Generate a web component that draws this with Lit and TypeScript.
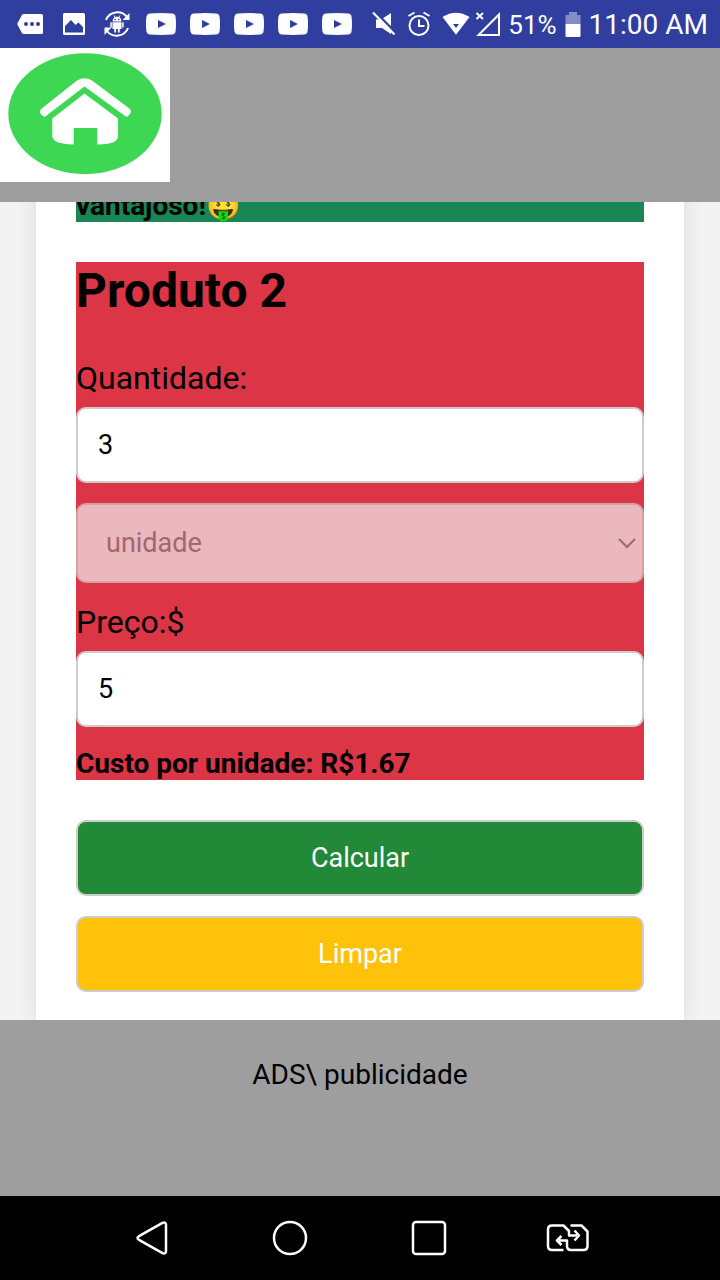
import { LitElement, html, css, svg } from "lit";
import { customElement } from "lit/decorators.js";

const video = html`<svg class="video" width="30" height="22" viewBox="0 0 30 22" aria-hidden="true">
  <path fill="#fff" fill-rule="evenodd" d="M4 .5Q15-.3 26 .5Q29.300.9 29.600 4Q30.400 11 29.600 18Q29.300 21.100 26 21.500Q15 22.300 4 21.500Q.7 21.100.4 18Q-.4 11 .4 4Q.7.9 4 .5ZM12 7V15L20 11Z"/>
</svg>`;

@customElement("status-bar")
class StatusBar extends LitElement {
  static styles = css`
    :host {
      display: flex;
      align-items: center;
      justify-content: space-between;
      height: 48px;
      flex: none;
      padding: 0 12px 0 17px;
      background: #303e9f;
      color: #fff;
      font-family: Roboto, sans-serif;
    }
    svg { display: block; flex: none; }
    .group { display: flex; align-items: center; }
    .notes { gap: 14px; }
    .notes .wide { margin-right: 3px; }
    .image { margin: 0 4px 0 3px; }
    .sync { margin-right: 1px; }
    .system { gap: 8px; }
    .clock { font-size: 28px; line-height: 34px; padding-top: 2px; }
    .percent { font-size: 26px; line-height: 30px; padding-top: 2px; }
  `;
  render() {
    return html`
      <div class="group notes">
        <svg class="wide" width="26" height="22" viewBox="0 0 26 22" aria-hidden="true">
          <path fill="#fff" d="M6.500 1H24.500Q26 1 26 2.500V19.500Q26 21 24.500 21H6.500Q5.500 21 5 20L.6 12Q.2 11 .6 10L5 2Q5.500 1 6.500 1Z"/>
          <g fill="#303e9f"><circle cx="9" cy="11" r="2"/><circle cx="15" cy="11" r="2"/><circle cx="21" cy="11" r="2"/></g>
        </svg>
        <svg class="image" width="22" height="22" viewBox="0 0 22 22" aria-hidden="true">
          <path fill="#fff" fill-rule="evenodd" d="M1.500 0H20.500Q22 0 22 1.500V20.500Q22 22 20.500 22H1.500Q0 22 0 20.500V1.500Q0 0 1.500 0ZM2 19.500H20V14L15.500 9.500L12.500 12L8 7L2 13Z"/>
        </svg>
        <svg class="sync" width="28" height="28" viewBox="0 0 28 28" aria-hidden="true">
          <g fill="none" stroke="#fff" stroke-width="2">
            <path d="M3 10A12 11.500 0 0 1 24 7"/><path d="M25 18A12 11.500 0 0 1 4 21"/>
          </g>
          <path fill="#fff" d="M26.500 3V10H19.500ZM1.500 25V17.500H8.500Z"/>
          <path fill="#fff" d="M9.500 11.500Q9.500 8.500 11.500 7.300L10.500 5.500L11.200 5.200L12.300 6.900Q14 6.300 15.700 6.900L16.800 5.200L17.500 5.500L16.500 7.300Q18.500 8.500 18.500 11.500ZM9.500 12.300H18.500V19H16.700V22.500H14.900V19H13.100V22.500H11.300V19H9.500ZM7.300 12.300H8.800V17.500H7.300ZM19.200 12.300H20.700V17.500H19.200Z"/>
          <g fill="#303e9f"><circle cx="12.200" cy="9.500" r=".8"/><circle cx="15.800" cy="9.500" r=".8"/></g>
        </svg>
        ${[0, 1, 2, 3, 4].map(() => video)}
      </div>
      <div class="group system">
        <svg width="128" height="28" viewBox="373 10 128 28" aria-hidden="true">
          <path fill="#fff" d="M377 19.500H382L392 13V34L383 28H377Z"/>
          <path stroke="#303e9f" stroke-width="2.500" d="M376 11.500L397 33"/>
          <path stroke="#fff" stroke-width="2" d="M374 12.500L395.500 34.500"/>
          <g fill="none" stroke="#fff" stroke-width="2">
            <circle cx="420" cy="25.500" r="9.500"/><path d="M420 19.500V26H425.500M409.500 16L415.500 12.500M430.500 16L424.500 12.500"/>
          </g>
          <path fill="#fff" d="M443.500 17Q457 8.500 470.500 17L457 34.800Z"/>
          <path fill="#303e9f" d="M454 24H460L457 28Z"/>
          <path fill="none" stroke="#fff" stroke-width="2" d="M479.500 35H500V14.500ZM477.500 13L484 19M484 13L477.500 19"/>
        </svg>
        <span class="percent">51%</span>
        <svg width="16" height="25" viewBox="0 0 16 25" aria-hidden="true">
          <path fill="#858cc7" d="M4 0H12V3H15.500V12H.5V3H4Z"/><path fill="#fff" d="M.5 12H15.500V24Q15.500 25 14.500 25H1.500Q.5 25 .5 24Z"/>
        </svg>
        <span class="clock">11:00 AM</span>
      </div>
    `;
  }
}

@customElement("nav-bar")
class NavBar extends LitElement {
  static styles = css`
    :host {
      display: flex;
      align-items: center;
      justify-content: center;
      gap: 95px;
      height: 84px;
      flex: none;
      padding-right: 2px;
      background: #000;
      box-sizing: border-box;
    }
    button { padding: 0; border: 0; background: none; }
    svg { display: block; }
  `;
  icon(label: string, shape: unknown) {
    return html`<button type="button" aria-label=${label}>
      <svg width="44" height="44" viewBox="0 0 44 44" fill="none" stroke="#fff" stroke-width="2.500" stroke-linecap="butt" stroke-linejoin="round">${shape}</svg>
    </button>`;
  }
  render() {
    return html`
      ${this.icon("Voltar", svg`<path d="M33.500 6.800L10 20.200Q7 22 10 23.800L33.500 37.200Q37 38.500 37 35V9Q37 5.500 33.500 6.800Z"/>`)}
      ${this.icon("Início", svg`<circle cx="22" cy="22" r="16"/>`)}
      ${this.icon("Recentes", svg`<rect x="6" y="6" width="32" height="32" rx="3"/>`)}
      ${this.icon("Alternar", svg`<path d="M17.500 34H6Q2 34 2 30V13.500Q2 9.500 6 9.500H17.500L23 15V19.500H31M24.500 9.500H35.500L41.500 15.500V30Q41.500 34 37.500 34H25Q21 34 21 30V24.500H13M28.500 14.500L33 19.500L28.500 24.500M15.500 20L11 24.500L15.500 29"/>`)}
    `;
  }
}

@customElement("app-root")
class AppRoot extends LitElement {
  static styles = css`
    :host {
      display: flex;
      flex-direction: column;
      height: 100vh;
      font-family: Roboto, sans-serif;
      font-size: 28px;
      line-height: 33px;
      color: #000;
      background: #f3f3f3;
    }
    * { box-sizing: border-box; }
    header { flex: none; padding-bottom: 20px; background: #9e9e9e; }
    .home { display: block; width: 170px; background: #fff; }
    .home svg { display: block; }
    main {
      flex: 1;
      min-height: 0;
      overflow: hidden;
      display: flex;
      flex-direction: column;
      justify-content: flex-end;
    }
    .card {
      margin: 0 5%;
      padding: 40px 40px 28px;
      background: #fff;
      box-shadow: 0 0 20px rgba(0, 0, 0, 0.1);
    }
    .result { margin: 0; font-weight: 700; }
    .best { background: #198754; }
    .product { margin: 40px 0; background: #dc3545; }
    h2 { margin: 0 0 40px; font-size: 48px; line-height: 57px; font-weight: 700; }
    label { display: block; margin-bottom: 10px; font-size: 32px; line-height: 38px; }
    input, select, .action {
      display: block;
      width: 100%;
      height: 76px;
      margin: 0 0 20px;
      padding: 0 20px;
      border: 2px solid #ccc;
      border-radius: 10px;
      font-family: inherit;
      font-size: 27px;
      color: #000;
      background: #fff;
    }
    .unit { display: grid; align-items: center; margin-bottom: 20px; }
    .unit > * { grid-area: 1 / 1; }
    .unit svg { justify-self: end; margin-right: 7px; }
    select {
      appearance: none;
      height: 80px;
      margin: 0;
      padding: 0 28px;
      border-color: #d3a0a5;
      background: #ebb8bd;
      color: #a0686e;
      opacity: 1;
    }
    .action { color: #fff; text-align: center; }
    .calc { background: #228939; }
    .clear { margin-bottom: 0; background: #ffc20a; }
    footer {
      flex: none;
      height: 176px;
      padding-top: 38px;
      text-align: center;
      background: #9e9e9e;
    }
  `;
  render() {
    return html`
      <status-bar></status-bar>
      <header>
        <a class="home" href="#" aria-label="Início">
          <svg width="170" height="134" viewBox="0 0 170 134" aria-hidden="true">
            <ellipse cx="85" cy="65.700" rx="76.700" ry="60.500" fill="#3dd753"/>
            <path fill="#fff" d="M41 61L77 32.500Q84.500 28 92 32.500L130 61Q133 65 126.500 69L84.500 38.500L44.500 69Q37.500 65 41 61Z"/>
            <path fill="#fff" d="M84.500 45.500L118 70.500V88Q118 96.500 97.300 96.500V80H73.700V96.500Q52.300 96 52.300 88V70.500Z"/>
          </svg>
        </a>
      </header>
      <main>
        <section class="card">
          <p class="result best">vantajoso!🤑</p>
          <div class="product">
            <h2>Produto 2</h2>
            <label for="qty">Quantidade:</label>
            <input id="qty" type="text" inputmode="decimal" .value=${"3"} />
            <div class="unit">
              <select aria-label="Unidade" disabled><option>unidade</option></select>
              <svg width="20" height="12" viewBox="0 0 20 12" fill="none" stroke="#a0686e" stroke-width="2" aria-hidden="true"><path d="M2 2L10 10L18 2"/></svg>
            </div>
            <label for="price">Preço:$</label>
            <input id="price" type="text" inputmode="decimal" .value=${"5"} />
            <p class="result">Custo por unidade: R$1.67</p>
          </div>
          <button class="action calc" type="button">Calcular</button>
          <button class="action clear" type="button">Limpar</button>
        </section>
      </main>
      <footer>ADS\\ publicidade</footer>
      <nav-bar></nav-bar>
    `;
  }
}
